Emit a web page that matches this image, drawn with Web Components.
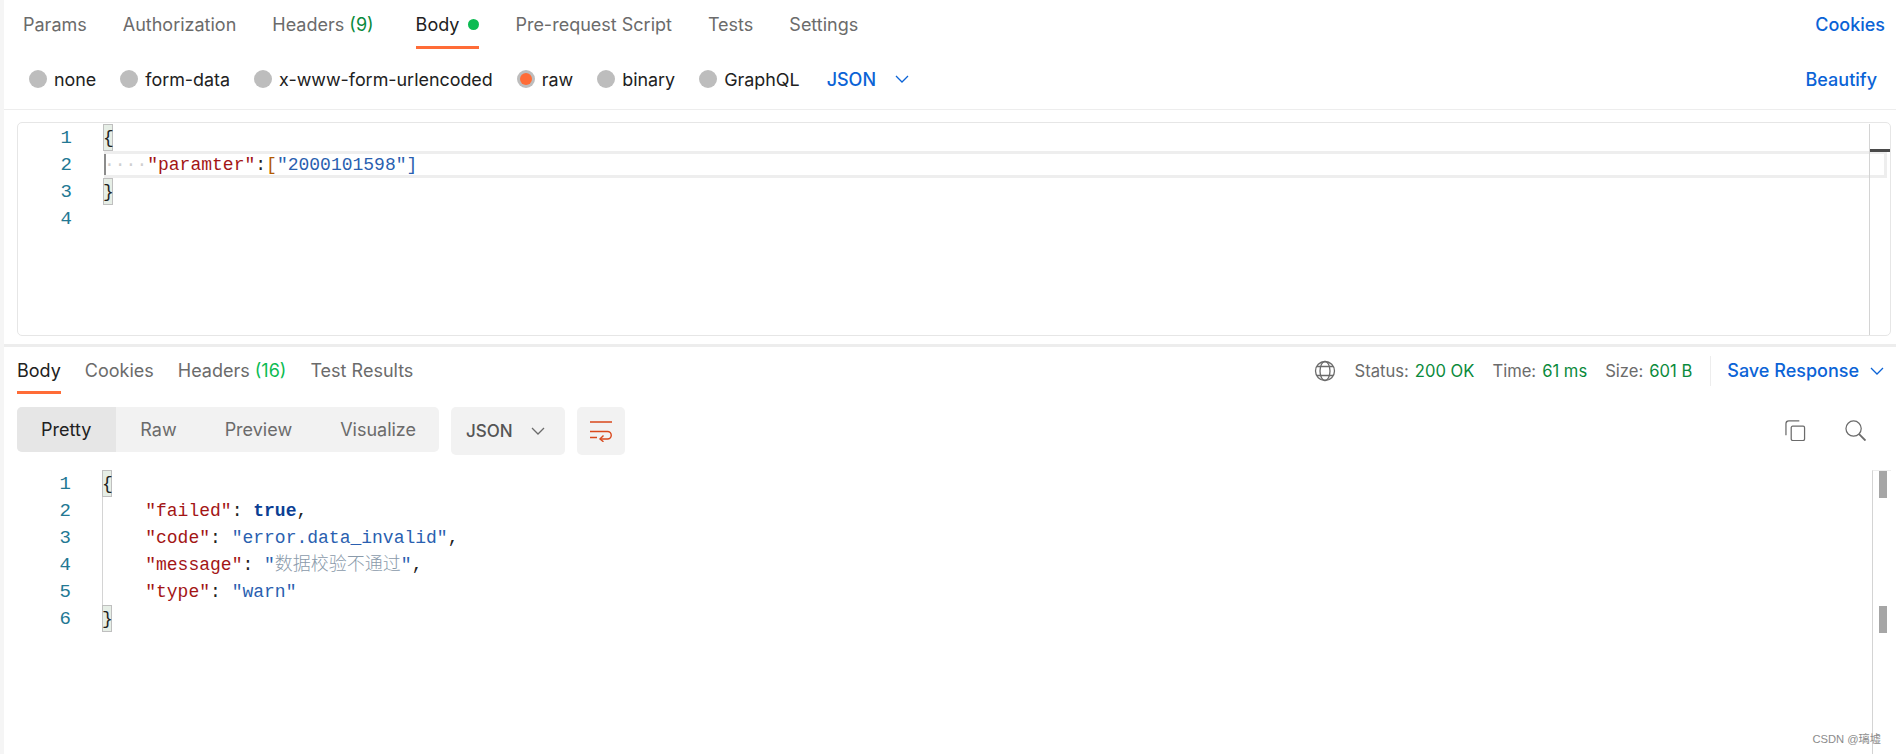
<!DOCTYPE html>
<html>
<head>
<meta charset="utf-8">
<style>
  html, body { margin: 0; height: 100%; background: #fff; overflow: hidden; }
  body { font-family: Inter, "Noto Sans CJK SC", sans-serif; }
</style>
</head>
<body>
<pm-app></pm-app>
<script>
const chevron = (w, color) => `<svg width="${w}" height="${w}" viewBox="0 0 16 16" fill="none" stroke="${color}" stroke-width="1.3"><path d="M2 5 L8 11 L14 5"/></svg>`;

class PmTab extends HTMLElement {
  constructor() {
    super();
    this.shadowDOM = this.attachShadow({mode: 'open'});
  }
  connectedCallback() {
    const active = this.hasAttribute('active');
    this.shadowDOM.innerHTML = `
      <style>
        :host { display: flex; align-items: center; height: 100%; position: relative; white-space: nowrap;
                font-size: 18px; color: ${active ? '#212121' : '#6b6b6b'}; }
        :host([active])::after { content: ''; position: absolute; left: 0; right: 0; bottom: 0; height: 3px; background: #ff6c37; }
        ::slotted(b) { font-weight: 400; color: #0a8a3c; }
      </style>
      <slot></slot>`;
  }
}
customElements.define('pm-tab', PmTab);

class PmRadio extends HTMLElement {
  constructor() {
    super();
    this.shadowDOM = this.attachShadow({mode: 'open'});
  }
  connectedCallback() {
    const on = this.hasAttribute('checked');
    this.shadowDOM.innerHTML = `
      <style>
        :host { display: flex; align-items: center; gap: 7px; font-size: 17.9px; color: #212121; white-space: nowrap; }
        .dot { width: 18px; height: 18px; border-radius: 50%; background: #bdbdbd; display: flex; align-items: center; justify-content: center; }
        .dot i { width: 12px; height: 12px; border-radius: 50%; background: #ff6c37; display: ${on ? 'block' : 'none'}; }
      </style>
      <span class="dot"><i></i></span><slot></slot>`;
  }
}
customElements.define('pm-radio', PmRadio);

class CodeView extends HTMLElement {
  constructor() {
    super();
    this.shadowDOM = this.attachShadow({mode: 'open'});
  }
  connectedCallback() {
    const lines = this.lines || [];
    const nums = lines.map((_, i) => `<div>${i + 1}</div>`).join('');
    const rows = lines.map(l => `<div class="row ${l.cls || ''}">${l.html || '&nbsp;'}</div>`).join('');
    this.shadowDOM.innerHTML = `
      <style>
        :host { display: flex; font-family: "Liberation Mono", "Noto Sans CJK SC", monospace; font-size: 18px; line-height: 29px; color: #212121; }
        .nums { width: 54px; text-align: right; color: #237893; font-size: 19px; flex: none; }
        .nums div { height: 27px; }
        .code { flex: 1; margin-left: 31px; position: relative; }
        .row { height: 27px; white-space: pre; box-sizing: border-box; position: relative; }
        .row.cur { box-shadow: inset 0 3px 0 #eeeeee, inset 0 -3px 0 #eeeeee, inset -3px 0 0 #eeeeee, inset 2px 0 0 #8c8c8c; margin-left: 1px; padding-left: 0; }
        .row.guide { box-shadow: inset 1px 0 0 #d4d4d4; }
        .k { color: #a31515; } .s { color: #2a5fb0; } .p { color: #212121; } .t { color: #0b3f94; font-weight: 700; }
        .o { color: #b35a00; }
        .dots { color: #cfcfcf; }
        .zh { font-family: "Noto Sans CJK SC", sans-serif; font-size: 18px; line-height: 0; color: #8a9aaa; font-weight: 300; }
        .br { display: inline-block; width: 10px; height: 27px; background: #e6eee6; box-shadow: inset 0 0 0 1px #bfbfbf; vertical-align: top; text-align: center; }
      </style>
      <div class="nums">${nums}</div>
      <div class="code">${rows}</div>`;
  }
}
customElements.define('code-view', CodeView);

class PmApp extends HTMLElement {
  constructor() {
    super();
    this.shadowDOM = this.attachShadow({mode: 'open'});
  }
  connectedCallback() {
    this.render();
    const lines = this.shadowDOM.querySelectorAll('code-view');
    lines[0].lines = [
      {html: '<span class="br">{</span>'},
      {cls: 'cur', html: '<span class="dots">····</span><span class="k">"paramter"</span><span class="p">:</span><span class="o">[</span><span class="s">"2000101598"</span><span class="s">]</span>'},
      {html: '<span class="br">}</span>'},
      {html: ''}
    ];
    lines[1].lines = [
      {html: '<span class="br">{</span>'},
      {cls: 'guide', html: '    <span class="k">"failed"</span><span class="p">: </span><span class="t">true</span><span class="p">,</span>'},
      {cls: 'guide', html: '    <span class="k">"code"</span><span class="p">: </span><span class="s">"error.data_invalid"</span><span class="p">,</span>'},
      {cls: 'guide', html: '    <span class="k">"message"</span><span class="p">: </span><span class="s">"</span><span class="zh">数据校验不通过</span><span class="s">"</span><span class="p">,</span>'},
      {cls: 'guide', html: '    <span class="k">"type"</span><span class="p">: </span><span class="s">"warn"</span>'},
      {html: '<span class="br">}</span>'}
    ];
    lines.forEach(l => l.connectedCallback());
  }
  render() {
    this.shadowDOM.innerHTML = `
      <style>
        :host { display: block; width: 1896px; height: 754px; box-sizing: border-box; border-left: 4px solid #f5f5f5; position: relative; background: #fff; overflow: hidden; font-family: Inter, "Noto Sans CJK SC", sans-serif; }
        .tabs { display: flex; height: 49px; padding: 0 11px 0 19px; gap: 36px; }
        .tabs .spacer { flex: 1; }
        .link { color: #0b63d6; font-size: 18px; font-weight: 500; display: flex; align-items: center; white-space: nowrap; }
        .dot { display: inline-block; width: 11px; height: 11px; border-radius: 50%; background: #0cbb52; margin-left: 9px; }
        .types { display: flex; align-items: center; height: 60px; padding: 0 19px 0 25px; gap: 24px; border-bottom: 1px solid #ededed; }
        .types .spacer { flex: 1; }
        .editor { margin: 12px 5px 0 13px; height: 214px; border: 1px solid #e6e6e6; border-radius: 5px; position: relative; padding-top: 1px; box-sizing: border-box; display: flex; }
        .editor code-view { flex: 1; margin-right: -18px; }
        .rail { width: 20px; flex: none; border-left: 1px solid #d4d4d4; position: relative; }
        .rail::after { content: ''; position: absolute; left: 0; right: 0; top: 25px; height: 3px; background: #4a4a4a; }
        .split { height: 3px; background: #ededed; margin-top: 8px; }
        .res-tabs { display: flex; height: 47px; padding: 0 0 0 13px; gap: 24px; align-items: stretch; }
        .res-tabs .spacer { flex: 1; }
        .meta { display: flex; align-items: center; font-size: 16.6px; color: #6b6b6b; white-space: nowrap; }
        .meta b { font-weight: 400; color: #0a8a3c; margin-left: 6px; margin-right: 18px; }
        .meta svg.globe { margin-right: 19px; }
        .save { display: flex; align-items: center; gap: 10px; border-left: 1px solid #ededed; height: 30px; padding: 0 11px 0 16px; color: #0b63d6; font-size: 18px; font-weight: 500; }
        .bar { display: flex; align-items: flex-start; height: 48px; margin-top: 13px; padding-left: 13px; }
        .seg { display: flex; background: #f2f2f2; border-radius: 5px; height: 45px; font-size: 18px; color: #6b6b6b; align-items: center; width: 422px; }
        .seg span { display: flex; align-items: center; height: 100%; padding: 0 24px; }
        .seg .on { background: #e6e6e6; color: #212121; border-radius: 5px 0 0 5px; padding-right: 25px; }
        .lang { display: flex; align-items: center; justify-content: space-between; box-sizing: border-box; background: #f2f2f2; border-radius: 5px; width: 114px; height: 48px; padding: 0 19px 0 15px; margin-left: 12px; font-size: 17px; font-weight: 500; color: #555; }
        .wrap { display: flex; align-items: center; justify-content: center; width: 48px; height: 48px; background: #f2f2f2; border-radius: 5px; margin-left: 12px; }
        .bar .spacer { flex: 1; }
        .ico { display: flex; gap: 39px; padding: 13px 30px 0 0; }
        .out { display: flex; margin: 15px 5px 0 13px; height: 285px; }
        .out code-view { flex: 1; align-self: flex-start; }
        .rail2 { width: 18px; flex: none; border-left: 1px solid #d4d4d4; border-top: 1px solid #ededed; position: relative; }
        .rail2 i { position: absolute; left: 6px; width: 8px; height: 27px; background: #a6a6a6; }
        .mark { position: absolute; right: 15px; bottom: 8px; font-size: 11.2px; color: #8c8c8c; font-family: "Liberation Sans", "Noto Sans CJK SC", sans-serif; }
      </style>
      <div class="tabs">
        <pm-tab>Params</pm-tab>
        <pm-tab>Authorization</pm-tab>
        <pm-tab style="margin-right:6px">Headers&nbsp;<b>(9)</b></pm-tab>
        <pm-tab active>Body<span class="dot"></span></pm-tab>
        <pm-tab>Pre-request Script</pm-tab>
        <pm-tab>Tests</pm-tab>
        <pm-tab>Settings</pm-tab>
        <span class="spacer"></span>
        <span class="link">Cookies</span>
      </div>
      <div class="types">
        <pm-radio>none</pm-radio>
        <pm-radio>form-data</pm-radio>
        <pm-radio>x-www-form-urlencoded</pm-radio>
        <pm-radio checked>raw</pm-radio>
        <pm-radio>binary</pm-radio>
        <pm-radio>GraphQL</pm-radio>
        <span class="link" style="gap:18px;margin-left:3px">JSON ${chevron(16, '#0b63d6')}</span>
        <span class="spacer"></span>
        <span class="link">Beautify</span>
      </div>
      <div class="editor">
        <code-view></code-view>
        <div class="rail"></div>
      </div>
      <div class="split"></div>
      <div class="res-tabs">
        <pm-tab active>Body</pm-tab>
        <pm-tab>Cookies</pm-tab>
        <pm-tab>Headers&nbsp;<b style="color:#0cbb52">(16)</b></pm-tab>
        <pm-tab>Test Results</pm-tab>
        <span class="spacer"></span>
        <div class="meta">
          <svg class="globe" width="22" height="22" viewBox="0 0 22 22" fill="none" stroke="#6b6b6b" stroke-width="1.3"><circle cx="11" cy="11" r="9.5"/><ellipse cx="11" cy="11" rx="5" ry="9.5"/><path d="M3 6.5h16M3 15.5h16"/></svg>
          Status:<b>200 OK</b>Time:<b>61 ms</b>Size:<b>601 B</b>
          <span class="save">Save Response ${chevron(16, '#0b63d6')}</span>
        </div>
      </div>
      <div class="bar">
        <div class="seg">
          <span class="on">Pretty</span>
          <span>Raw</span>
          <span>Preview</span>
          <span>Visualize</span>
        </div>
        <div class="lang">JSON ${chevron(16, '#6b6b6b')}</div>
        <div class="wrap">
          <svg width="22" height="21" viewBox="0 0 22 21" fill="none" stroke="#d9481c" stroke-width="1.4"><path d="M0 1h22M0 10.500h17.500a3.700 3.700 0 0 1 0 7.500h-7"/><path d="M13.500 14.500l-3.500 3.500 3.500 2.800M0 16.500h7"/></svg>
        </div>
        <span class="spacer"></span>
        <div class="ico">
          <svg width="21" height="21" viewBox="0 0 22 22" fill="none" stroke="#6b6b6b" stroke-width="1.3"><rect x="6.500" y="6.500" width="14" height="15" rx="1.500"/><path d="M15 1H4a3 3 0 0 0-3 3v12"/></svg>
          <svg width="21" height="21" viewBox="0 0 22 22" fill="none" stroke="#6b6b6b" stroke-width="1.3"><circle cx="9" cy="9" r="8"/><path d="M14.500 14.500l7 7" stroke-width="2"/></svg>
        </div>
      </div>
      <div class="out">
        <code-view></code-view>
        <div class="rail2"><i style="top:0"></i><i style="top:135px"></i></div>
      </div>
      <div class="mark">CSDN @璃墟</div>`;
  }
}
customElements.define('pm-app', PmApp);
</script>
</body>
</html>
